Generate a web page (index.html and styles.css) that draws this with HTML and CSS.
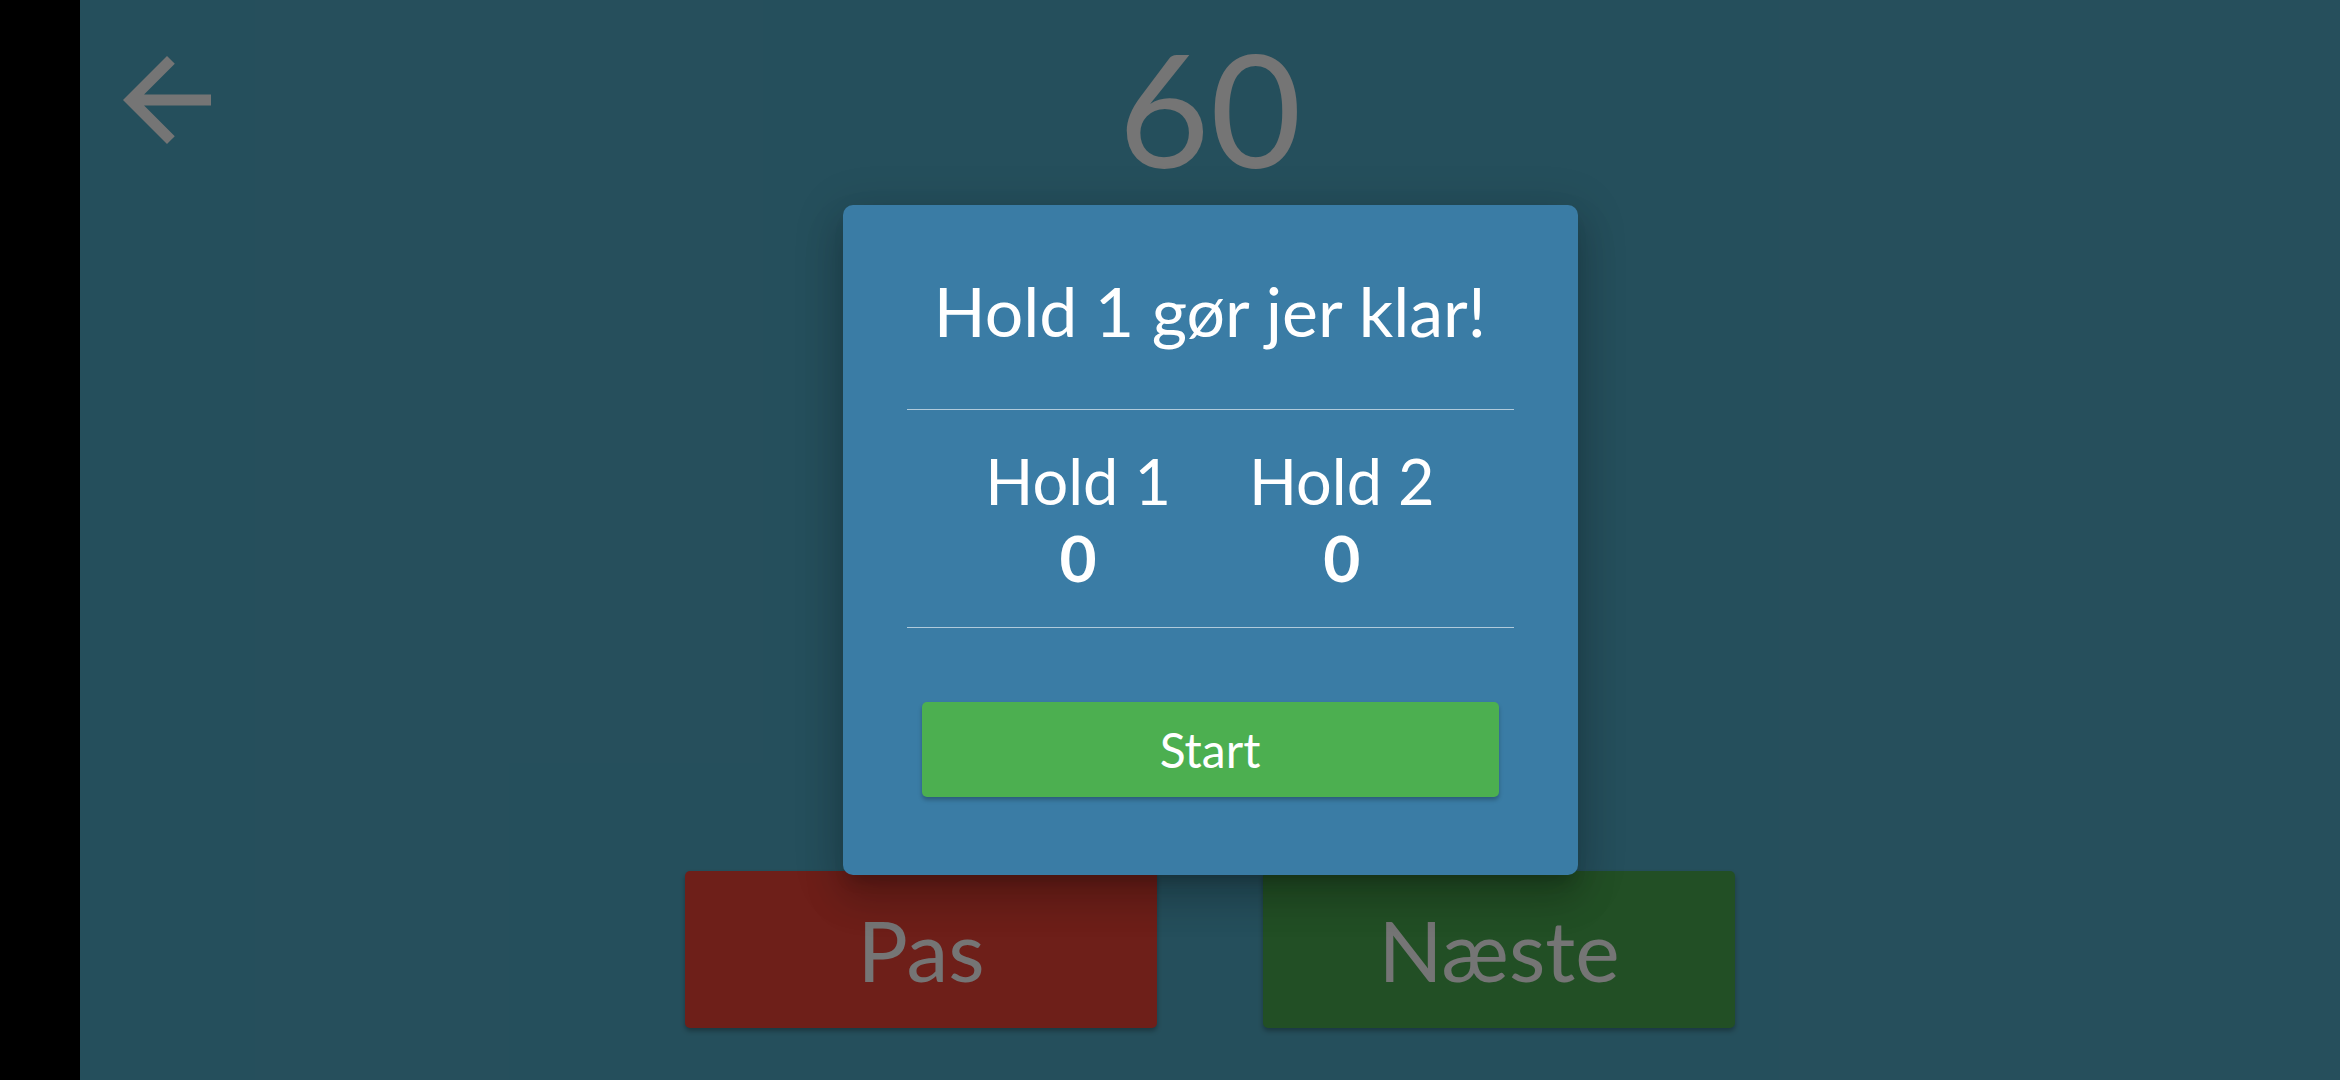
FILE: index.html
```html
<!DOCTYPE html>
<html lang="da">
<head>
<meta charset="utf-8">
<title>Hold 1 gør jer klar!</title>
<link rel="stylesheet" href="styles.css">
</head>
<body>
<div class="app">
  <div class="side-bar"></div>
  <main class="game">
    <header class="top">
      <button class="back" aria-label="Tilbage">
        <svg viewBox="0 0 24 24" width="132" height="132"><path d="M20 11H7.83l5.59-5.59L12 4l-8 8 8 8 1.41-1.41L7.83 13H20v-2z" fill="currentColor"/></svg>
      </button>
      <div class="timer">60</div>
    </header>
    <div class="spacer"></div>
    <div class="actions">
      <button class="act pass">Pas</button>
      <button class="act next">Næste</button>
    </div>
    <div class="overlay">
      <div class="dialog">
        <h2 class="title">Hold 1 gør jer klar!</h2>
        <hr class="rule">
        <div class="scores">
          <div class="team"><div class="team-name">Hold 1</div><div class="team-score">0</div></div>
          <div class="team"><div class="team-name">Hold 2</div><div class="team-score">0</div></div>
        </div>
        <hr class="rule rule-bottom">
        <button class="start">Start</button>
      </div>
    </div>
  </main>
</div>
</body>
</html>
```

FILE: styles.css
```css
html, body {
  margin: 0;
  padding: 0;
  height: 100%;
  background: #000;
  font-family: Lato, "Noto Sans", sans-serif;
}
.app {
  display: flex;
  height: 1080px;
}
.side-bar {
  width: 80px;
  background: #000;
  flex: none;
}
.game {
  position: relative;
  flex: 1;
  display: flex;
  flex-direction: column;
  background: #3f8499;
  overflow: hidden;
}
.top {
  position: relative;
  height: 200px;
}
.back {
  position: absolute;
  left: 21px;
  top: 34px;
  width: 132px;
  height: 132px;
  padding: 0;
  border: 0;
  background: none;
  color: #c3c3c3;
  display: block;
}
.back svg { display: block; }
.timer {
  text-align: center;
  color: #c3c3c3;
  font-size: 158px;
  line-height: 1;
  margin-top: 28px;
}
.spacer { flex: 1; }
.actions {
  display: flex;
  justify-content: center;
  gap: 106px;
  margin-bottom: 52px;
}
.act {
  width: 472px;
  height: 157px;
  border: 0;
  border-radius: 5px;
  color: #c3c3c3;
  font-family: Lato, "Noto Sans", sans-serif;
  font-size: 84px;
  box-shadow: 0 3px 5px rgba(0,0,0,0.3);
  padding: 0;
}
.pass { background: #b7342b; }
.next { background: #3a843f; }
.overlay {
  position: absolute;
  inset: 0;
  background: rgba(0,0,0,0.4);
  display: flex;
  align-items: center;
  justify-content: center;
}
.dialog {
  width: 735px;
  box-sizing: border-box;
  background: #3a7ca5;
  border-radius: 10px;
  padding: 65px 64px 78px;
  display: flex;
  flex-direction: column;
  box-shadow: 0 11px 15px -7px rgba(0,0,0,.2), 0 24px 38px 3px rgba(0,0,0,.14), 0 9px 46px 8px rgba(0,0,0,.12);
  color: #fff;
}
.title {
  margin: 0;
  font-weight: 400;
  font-size: 68px;
  line-height: 1.2;
  text-align: center;
}
.rule {
  margin: 57px 0 0;
  border: 0;
  height: 1px;
  background: rgba(255,255,255,0.6);
}
.scores {
  display: flex;
  justify-content: center;
  gap: 78px;
  margin-top: 32px;
}
.team {
  display: flex;
  flex-direction: column;
  align-items: center;
}
.team-name {
  font-size: 63px;
  line-height: 77px;
}
.team-score {
  font-size: 64px;
  line-height: 77px;
  font-weight: 700;
}
.rule-bottom { margin-top: 31px; }
.start {
  margin: 74px 15px 0;
  height: 95px;
  border: 0;
  border-radius: 5px;
  background: #4caf50;
  color: #fff;
  font-family: Lato, "Noto Sans", sans-serif;
  font-size: 48px;
  padding: 0;
  box-shadow: 0 3px 4px rgba(0,0,0,0.25);
}
```
